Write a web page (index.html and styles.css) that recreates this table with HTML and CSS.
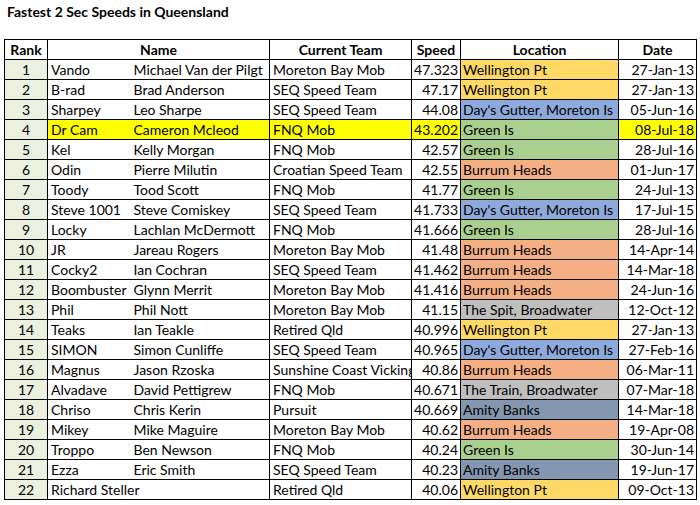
FILE: index.html
```html
<!DOCTYPE html>
<html>
<head>
<meta charset="utf-8">
<link rel="stylesheet" href="styles.css">
</head>
<body>
<h1 class="title">Fastest 2 Sec Speeds in Queensland</h1>
<table class="sheet">
<colgroup>
<col class="c-rank"><col class="c-nick"><col class="c-full"><col class="c-team"><col class="c-speed"><col class="c-loc"><col class="c-date">
</colgroup>
<thead>
<tr><th>Rank</th><th colspan="2">Name</th><th>Current Team</th><th>Speed</th><th>Location</th><th>Date</th></tr>
</thead>
<tbody>
<tr><td class="rank">1</td><td class="nick">Vando</td><td class="full">Michael Van der Pilgt</td><td class="team">Moreton Bay Mob</td><td class="speed">47.323</td><td class="loc wel">Wellington Pt</td><td class="date">27-Jan-13</td></tr>
<tr><td class="rank">2</td><td class="nick">B-rad</td><td class="full">Brad Anderson</td><td class="team">SEQ Speed Team</td><td class="speed">47.17</td><td class="loc wel">Wellington Pt</td><td class="date">27-Jan-13</td></tr>
<tr><td class="rank">3</td><td class="nick">Sharpey</td><td class="full">Leo Sharpe</td><td class="team">SEQ Speed Team</td><td class="speed">44.08</td><td class="loc day">Day's Gutter, Moreton Is</td><td class="date">05-Jun-16</td></tr>
<tr class="hl"><td class="rank">4</td><td class="nick">Dr Cam</td><td class="full">Cameron Mcleod</td><td class="team">FNQ Mob</td><td class="speed">43.202</td><td class="loc grn">Green Is</td><td class="date">08-Jul-18</td></tr>
<tr><td class="rank">5</td><td class="nick">Kel</td><td class="full">Kelly Morgan</td><td class="team">FNQ Mob</td><td class="speed">42.57</td><td class="loc grn">Green Is</td><td class="date">28-Jul-16</td></tr>
<tr><td class="rank">6</td><td class="nick">Odin</td><td class="full">Pierre Milutin</td><td class="team">Croatian Speed Team</td><td class="speed">42.55</td><td class="loc bur">Burrum Heads</td><td class="date">01-Jun-17</td></tr>
<tr><td class="rank">7</td><td class="nick">Toody</td><td class="full">Tood Scott</td><td class="team">FNQ Mob</td><td class="speed">41.77</td><td class="loc grn">Green Is</td><td class="date">24-Jul-13</td></tr>
<tr><td class="rank">8</td><td class="nick">Steve 1001</td><td class="full">Steve Comiskey</td><td class="team">SEQ Speed Team</td><td class="speed">41.733</td><td class="loc day">Day's Gutter, Moreton Is</td><td class="date">17-Jul-15</td></tr>
<tr><td class="rank">9</td><td class="nick">Locky</td><td class="full">Lachlan McDermott</td><td class="team">FNQ Mob</td><td class="speed">41.666</td><td class="loc grn">Green Is</td><td class="date">28-Jul-16</td></tr>
<tr><td class="rank">10</td><td class="nick">JR</td><td class="full">Jareau Rogers</td><td class="team">Moreton Bay Mob</td><td class="speed">41.48</td><td class="loc bur">Burrum Heads</td><td class="date">14-Apr-14</td></tr>
<tr><td class="rank">11</td><td class="nick">Cocky2</td><td class="full">Ian Cochran</td><td class="team">SEQ Speed Team</td><td class="speed">41.462</td><td class="loc bur">Burrum Heads</td><td class="date">14-Mar-18</td></tr>
<tr><td class="rank">12</td><td class="nick">Boombuster</td><td class="full">Glynn Merrit</td><td class="team">Moreton Bay Mob</td><td class="speed">41.416</td><td class="loc bur">Burrum Heads</td><td class="date">24-Jun-16</td></tr>
<tr><td class="rank">13</td><td class="nick">Phil</td><td class="full">Phil Nott</td><td class="team">Moreton Bay Mob</td><td class="speed">41.15</td><td class="loc gry">The Spit, Broadwater</td><td class="date">12-Oct-12</td></tr>
<tr><td class="rank">14</td><td class="nick">Teaks</td><td class="full">Ian Teakle</td><td class="team">Retired Qld</td><td class="speed">40.996</td><td class="loc wel">Wellington Pt</td><td class="date">27-Jan-13</td></tr>
<tr><td class="rank">15</td><td class="nick">SIMON</td><td class="full">Simon Cunliffe</td><td class="team">SEQ Speed Team</td><td class="speed">40.965</td><td class="loc day">Day's Gutter, Moreton Is</td><td class="date">27-Feb-16</td></tr>
<tr><td class="rank">16</td><td class="nick">Magnus</td><td class="full">Jason Rzoska</td><td class="team">Sunshine Coast Vicking</td><td class="speed">40.86</td><td class="loc bur">Burrum Heads</td><td class="date">06-Mar-11</td></tr>
<tr><td class="rank">17</td><td class="nick">Alvadave</td><td class="full">David Pettigrew</td><td class="team">FNQ Mob</td><td class="speed">40.671</td><td class="loc gry">The Train, Broadwater</td><td class="date">07-Mar-18</td></tr>
<tr><td class="rank">18</td><td class="nick">Chriso</td><td class="full">Chris Kerin</td><td class="team">Pursuit</td><td class="speed">40.669</td><td class="loc ami">Amity Banks</td><td class="date">14-Mar-18</td></tr>
<tr><td class="rank">19</td><td class="nick">Mikey</td><td class="full">Mike Maguire</td><td class="team">Moreton Bay Mob</td><td class="speed">40.62</td><td class="loc bur">Burrum Heads</td><td class="date">19-Apr-08</td></tr>
<tr><td class="rank">20</td><td class="nick">Troppo</td><td class="full">Ben Newson</td><td class="team">FNQ Mob</td><td class="speed">40.24</td><td class="loc grn">Green Is</td><td class="date">30-Jun-14</td></tr>
<tr><td class="rank">21</td><td class="nick">Ezza</td><td class="full">Eric Smith</td><td class="team">SEQ Speed Team</td><td class="speed">40.23</td><td class="loc ami">Amity Banks</td><td class="date">19-Jun-17</td></tr>
<tr><td class="rank">22</td><td class="nick" colspan="2">Richard Steller</td><td class="team">Retired Qld</td><td class="speed">40.06</td><td class="loc wel">Wellington Pt</td><td class="date">09-Oct-13</td></tr>
</tbody>
</table>
</body>
</html>
```
FILE: styles.css
```css
html, body {
  margin: 0;
  padding: 0;
  background: #ffffff;
}
body {
  font-family: Lato, "Liberation Sans", sans-serif;
  color: #000000;
}
.title {
  margin: 0;
  padding: 3px 0 0 7px;
  height: 39px;
  box-sizing: border-box;
  font-size: 14px;
  font-weight: bold;
  line-height: 17px;
}
.sheet {
  margin-left: 4px;
  border-collapse: collapse;
  table-layout: fixed;
  width: 692px;
  font-size: 14px;
}
.c-rank { width: 43px; }
.c-nick { width: 83px; }
.c-full { width: 139px; }
.c-team { width: 142px; }
.c-speed { width: 49px; }
.c-loc { width: 158px; }
.c-date { width: 78px; }
.sheet th, .sheet td {
  border: 1px solid #000000;
  height: 19px;
  padding: 0 2px;
  line-height: 19px;
  white-space: nowrap;
  overflow: hidden;
}
.sheet th {
  font-weight: bold;
  text-align: center;
  background: #ffffff;
}
.sheet td.rank {
  text-align: center;
  background: #ebf1de;
}
.sheet td.nick {
  border-right: none;
  padding-left: 3px;
}
.sheet td.full {
  border-left: none;
  padding-left: 3px;
}
.sheet td.team {
  padding-left: 3px;
  text-overflow: clip;
}
.sheet td.speed {
  text-align: right;
}
.sheet td.loc {
  padding-left: 2px;
}
.sheet td.date {
  text-align: right;
}
.hl td {
  background: #ffff00;
}
.sheet td.wel { background: #ffd966; }
.sheet td.day { background: #8ea9db; }
.sheet td.grn { background: #a9d08e; }
.sheet td.bur { background: #f4b084; }
.sheet td.gry { background: #bfbfbf; }
.sheet td.ami { background: #8497b0; }
.hl td.rank { background: #ebf1de; }
```
